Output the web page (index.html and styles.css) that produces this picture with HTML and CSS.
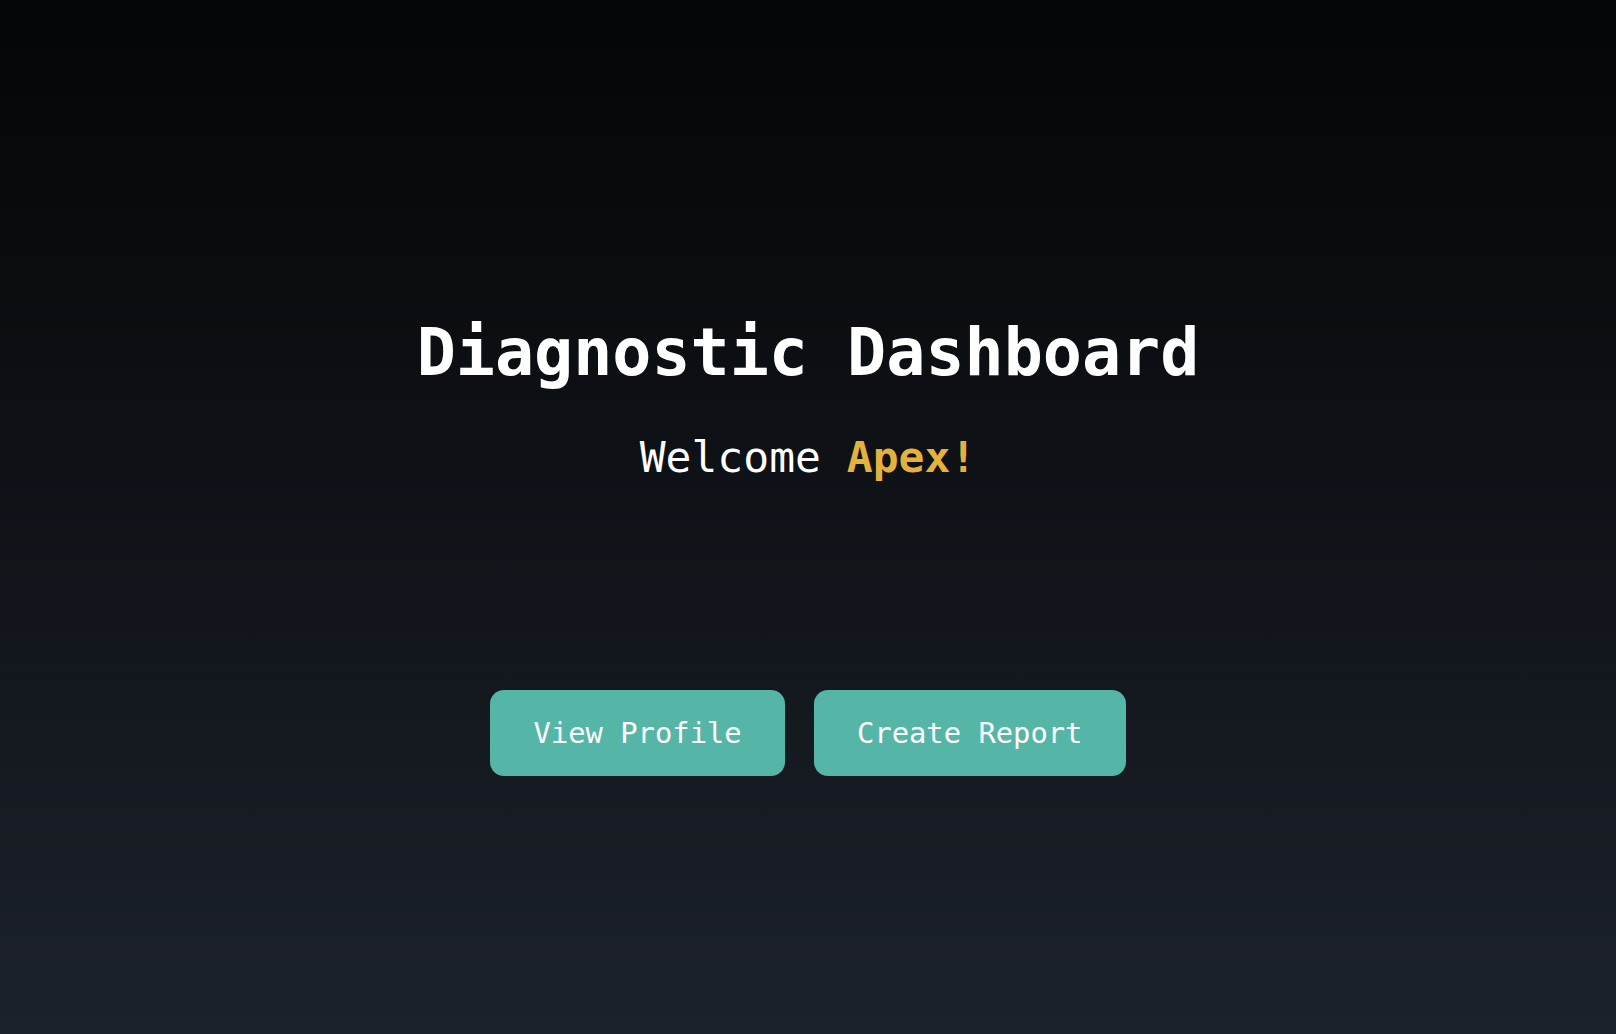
FILE: index.html
```html
<!DOCTYPE html>
<html lang="en">
<head>
<meta charset="utf-8">
<title>Diagnostic Dashboard</title>
<link rel="stylesheet" href="styles.css">
</head>
<body>
<main class="page">
  <header class="hero">
    <h1 class="title">Diagnostic Dashboard</h1>
    <p class="welcome">Welcome <span class="name">Apex!</span></p>
  </header>
  <nav class="actions">
    <button class="btn" type="button">View Profile</button>
    <button class="btn" type="button">Create Report</button>
  </nav>
</main>
</body>
</html>
```

FILE: styles.css
```css
html, body {
  margin: 0;
  padding: 0;
  height: 100%;
}

body {
  background: linear-gradient(to bottom, #040507 0%, #0e1116 45%, #1c222b 100%);
  font-family: "DejaVu Sans Mono", monospace;
  color: #ffffff;
}

.page {
  height: 100%;
  display: flex;
  flex-direction: column;
  align-items: center;
  padding-top: 315px;
  box-sizing: border-box;
}

.hero {
  display: flex;
  flex-direction: column;
  align-items: center;
}

.title {
  margin: 0;
  font-size: 65px;
  font-weight: bold;
  line-height: normal;
}

.welcome {
  margin: 42px 0 0;
  font-size: 43px;
  line-height: normal;
}

.name {
  color: #e4b23c;
  font-weight: bold;
}

.actions {
  display: flex;
  gap: 29px;
  margin-top: 208px;
}

.btn {
  font-family: "DejaVu Sans Mono", monospace;
  font-size: 28.8px;
  line-height: normal;
  color: #ffffff;
  background: #55b5a6;
  border: none;
  border-radius: 14px;
  padding: 26px 43.2px;
}
```
